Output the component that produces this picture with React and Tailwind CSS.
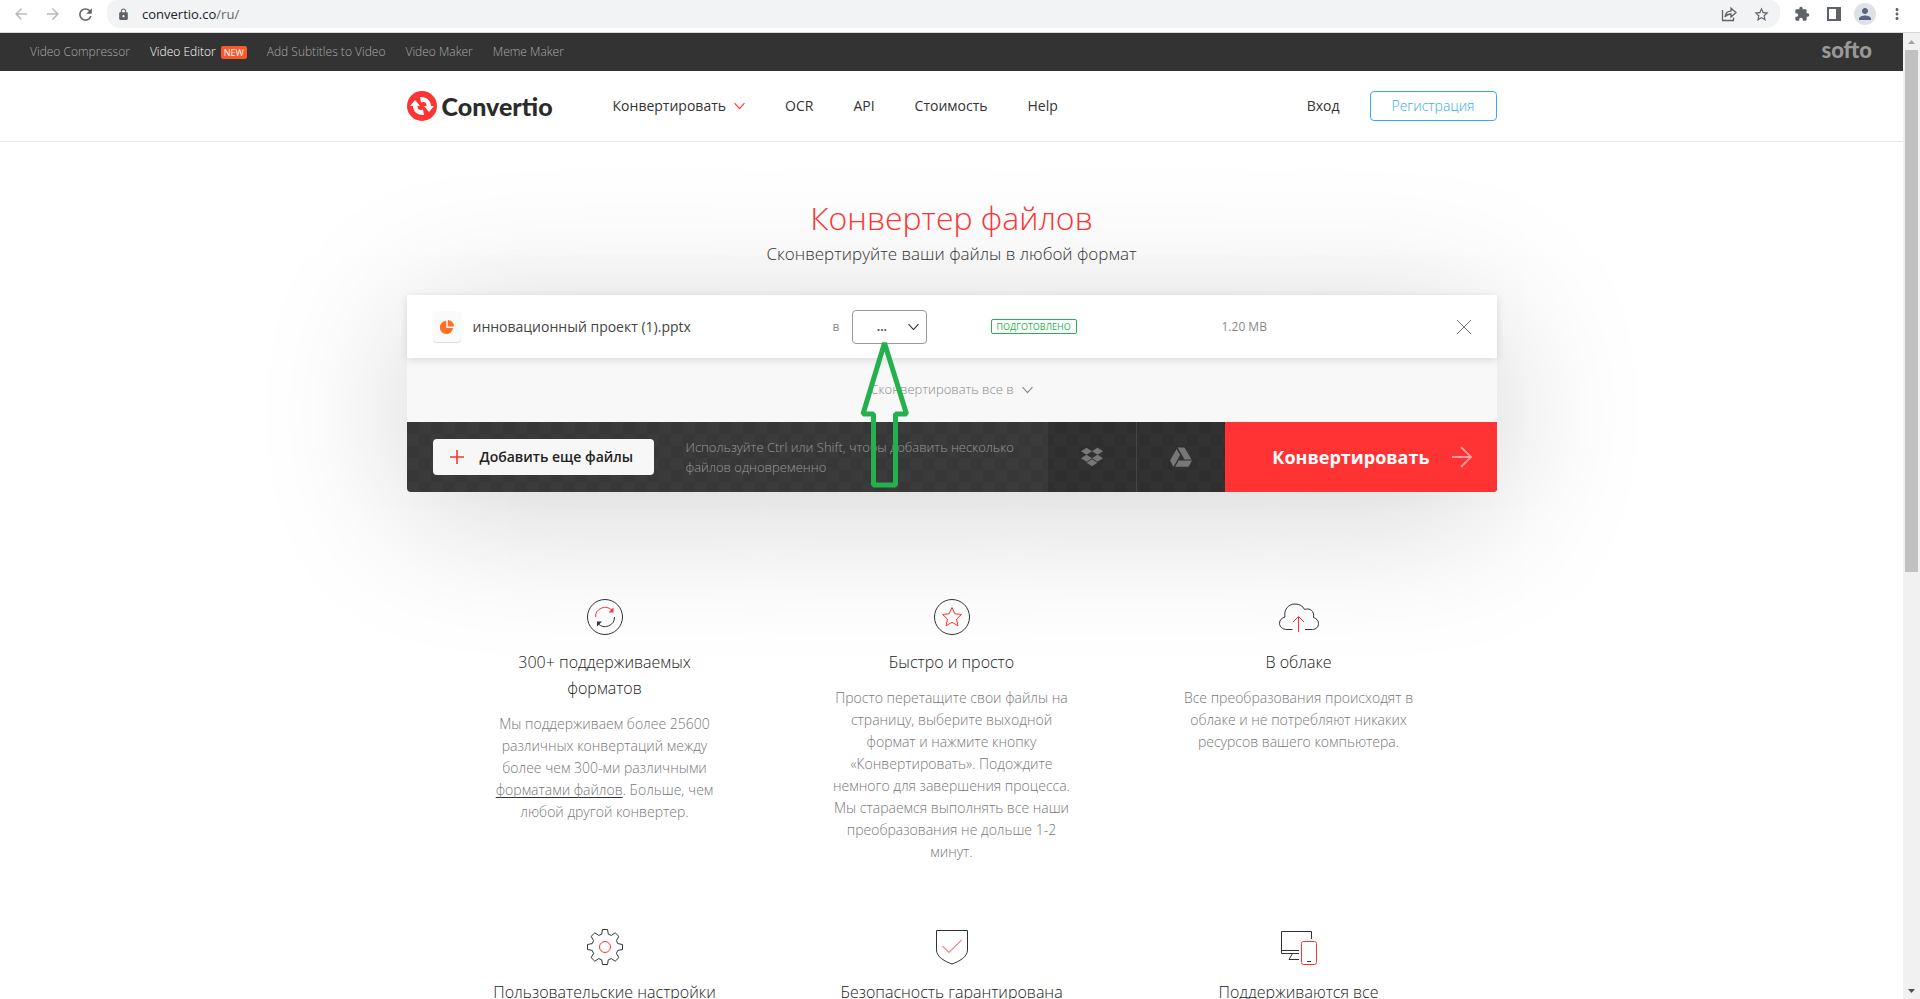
// App.jsx
import React from "react";
import {
  MdArrowBack,
  MdArrowForward,
  MdRefresh,
  MdLock,
  MdStarBorder,
  MdExtension,
  MdMoreVert,
  MdPerson,
} from "react-icons/md";
import { FaDropbox, FaGoogleDrive } from "react-icons/fa";

const promoLinks = [
  { label: "Video Compressor" },
  { label: "Video Editor", isNew: true },
  { label: "Add Subtitles to Video" },
  { label: "Video Maker" },
  { label: "Meme Maker" },
];

function Chevron({ className }) {
  return (
    <svg viewBox="0 0 10 7" className={className} fill="none" stroke="currentColor">
      <path d="M0.5 1 L5 6 L9.5 1" />
    </svg>
  );
}

// fake browser toolbar
function BrowserBar() {
  return (
    <div className="flex h-[33px] shrink-0 items-start border-b border-[#d5d7da] bg-white pl-3 text-[#5f6368]">
      <div className="flex h-7 items-center gap-3.5">
        <button aria-label="Назад" className="text-[#bababa]"><MdArrowBack size={18} /></button>
        <button aria-label="Вперёд" className="text-[#bababa]"><MdArrowForward size={18} /></button>
        <button aria-label="Обновить"><MdRefresh size={19} /></button>
      </div>
      <div className="ml-3 flex h-7 flex-1 items-center rounded-b-[14px] rounded-t-[10px] bg-[#f1f3f4] px-2.5">
        <MdLock size={13} />
        <div className="ml-3 flex-1 text-[13px] leading-5">
          <span className="text-[#202124]">convertio.co</span>/ru/
        </div>
        <div className="flex items-center gap-4">
          <button aria-label="Поделиться">
            <svg width="16" height="16" viewBox="0 0 16 16" fill="none" stroke="currentColor" strokeWidth="1.3">
              <path d="M1.5 4 V14.5 H12.5 V11.5" />
              <path d="M4 11 C4.5 7 7 5.2 10 5.2 V2.2 L15 6.6 L10 11 V8 C7.5 8 5.5 8.8 4 11 Z" />
            </svg>
          </button>
          <button aria-label="В закладки"><MdStarBorder size={17} /></button>
        </div>
      </div>
      <div className="mx-3.5 flex h-7 items-center gap-3">
        <div className="flex items-center gap-4">
          <button aria-label="Расширения"><MdExtension size={16} /></button>
          <button aria-label="Боковая панель">
            <svg width="16" height="16" viewBox="0 0 16 16">
              <path d="M1 1 H15 V15 H1 Z M3 3 V13 H10 V3 Z" fill="currentColor" fillRule="evenodd" />
            </svg>
          </button>
        </div>
        <button aria-label="Профиль" className="flex size-[22px] items-center justify-center rounded-full bg-[#dee1e6] text-[#5a6380]">
          <MdPerson size={18} />
        </button>
        <button aria-label="Меню"><MdMoreVert size={18} /></button>
      </div>
    </div>
  );
}

function PromoBar() {
  return (
    <div className="flex h-[38px] items-center justify-between bg-[#333] pl-[30px] pr-[31px] text-xs font-light text-[#aaa]">
      <div className="flex gap-5">
        {promoLinks.map((link) => (
          <a key={link.label} href="#" className={link.isNew ? "flex items-center gap-[5px] text-white" : ""}>
            {link.label}
            {link.isNew && (
              <span className="rounded-xs bg-[#f9572c] px-[3px] text-[9px] leading-[13px] font-normal">NEW</span>
            )}
          </a>
        ))}
      </div>
      <a href="#" className="pb-1 font-[Lato] text-[22px] leading-6 font-black text-[#999]">softo</a>
    </div>
  );
}

function Logo() {
  return (
    <a href="#" className="flex items-center gap-[5px]">
      <svg width="30" height="30" viewBox="0 0 30 30">
        <circle cx="15" cy="15" r="15" fill="#ff3333" />
        <g fill="#fff">
          <path d="M8 9 L13 15 H10.5 C10.5 18.5 12.5 20 16 18.5 L17 24 C10.5 24.5 6 20.5 6 15 H3 Z" />
          <path
            d="M8 9 L13 15 H10.5 C10.5 18.5 12.5 20 16 18.5 L17 24 C10.5 24.5 6 20.5 6 15 H3 Z"
            transform="rotate(180 15 15)"
          />
        </g>
      </svg>
      <span className="font-[Lato] text-[25px] leading-7 font-black text-[#2b2b2b]">Convertio</span>
    </a>
  );
}

function Header() {
  return (
    <header className="border-b border-[#e8e8e8]">
      <div className="mx-auto flex h-[70px] max-w-[1090px] items-center text-sm text-[#333]">
        <Logo />
        <nav className="ml-[60px] flex items-center gap-10">
          <a href="#" className="flex items-center gap-2">
            Конвертировать
            <Chevron className="w-[11px] text-[#ff3333]" />
          </a>
          <a href="#">OCR</a>
          <a href="#">API</a>
          <a href="#">Стоимость</a>
          <a href="#">Help</a>
        </nav>
        <div className="ml-auto flex items-center gap-[30px]">
          <a href="#">Вход</a>
          <button className="h-[30px] w-[127px] rounded border border-[#33aee6] font-light text-[#33aee6]">
            Регистрация
          </button>
        </div>
      </div>
    </header>
  );
}

// green annotation arrow that points at the format select
function PointerArrow() {
  return (
    <svg
      className="pointer-events-none absolute top-[31px] left-1 z-10"
      width="56"
      height="150"
      viewBox="0 0 56 150"
      fill="none"
      stroke="#22b14c"
      strokeWidth="5"
    >
      <path d="M28.5 2 L7 73 H17.5 V144 H39.5 V73 H50.5 Z" strokeLinejoin="bevel" />
    </svg>
  );
}

function FileRow() {
  return (
    <div className="relative z-10 grid h-[63px] grid-cols-[426fr_158fr_231fr_275fr] items-center bg-white shadow-[0_2px_8px_rgba(0,0,0,0.12)]">
      <div className="flex items-center gap-3 pl-[26px]">
        <div className="flex h-[31px] w-7 items-center justify-center rounded bg-[#fafafa] shadow-[0_1px_1px_rgba(0,0,0,0.15)]">
          <svg width="14" height="14" viewBox="0 0 14 14" fill="#ff6f26">
            <path d="M6.3 0.8 A6.6 6.6 0 1 0 13 8 H6.3 Z" />
            <path d="M7.8 0 A6.2 6.2 0 0 1 14 6.4 H7.8 Z" />
          </svg>
        </div>
        <span className="text-sm text-[#444]">инновационный проект (1).pptx</span>
      </div>
      <div className="flex items-center gap-[13px]">
        <label htmlFor="format" className="text-xs text-[#888]">в</label>
        <div className="relative">
          <select
            id="format"
            className="h-[34px] w-[75px] appearance-none rounded border border-[#999] bg-white pr-4 text-center text-xs font-bold text-[#555]"
          >
            <option>...</option>
          </select>
          <Chevron className="pointer-events-none absolute top-[13px] right-2 w-[11px] text-[#333]" />
          <PointerArrow />
        </div>
      </div>
      <div>
        <span className="block w-fit rounded-xs border border-[#25b34b] px-[5px] text-[9px] leading-[13px] text-[#25b34b]">
          ПОДГОТОВЛЕНО
        </span>
      </div>
      <div className="flex items-center justify-between pr-[26px] text-xs text-[#888]">
        1.20 MB
        <button aria-label="Удалить файл">
          <svg width="14" height="14" viewBox="0 0 14 14" stroke="#777" strokeWidth="1">
            <path d="M0 0 L14 14 M14 0 L0 14" />
          </svg>
        </button>
      </div>
    </div>
  );
}

function Converter() {
  return (
    <section className="mt-[27px] rounded-b shadow-[0_20px_150px_rgba(0,0,0,0.18)]">
      <FileRow />
      <div className="flex h-16 items-center justify-center bg-[#f8f8f8]">
        <button className="flex items-center gap-2 text-[13px] font-light text-[#888]">
          Сконвертировать все в
          <Chevron className="w-[11px]" />
        </button>
      </div>
      <div className="flex h-[70px] overflow-hidden rounded-b bg-[#333] bg-[conic-gradient(#3b3b3b_25%,#373737_0_50%,#3b3b3b_0_75%,#373737_0)] bg-size-[24px_24px]">
        <div className="flex flex-1 items-center gap-8 pl-[26px]">
          <button className="flex h-9 w-[221px] items-center gap-4 rounded bg-[#f7f7f7] pl-[17px] text-sm font-semibold text-[#222]">
            <svg width="14" height="14" viewBox="0 0 14 14" stroke="#ff3333" strokeWidth="1.6">
              <path d="M7 0 V14 M0 7 H14" />
            </svg>
            Добавить еще файлы
          </button>
          <p className="w-[340px] text-[13px] leading-5 font-light text-[#999]">
            Используйте Ctrl или Shift, чтобы добавить несколько файлов одновременно
          </p>
        </div>
        <button aria-label="Dropbox" className="flex w-[89px] items-center justify-center border-r border-[#444] bg-black/15 text-[#777]">
          <FaDropbox size={22} />
        </button>
        <button aria-label="Google Drive" className="flex w-[88px] items-center justify-center bg-black/15 text-[#777]">
          <FaGoogleDrive size={22} />
        </button>
        <button className="flex w-[272px] items-center justify-end gap-[22px] bg-[#ff3333] pr-[25px] text-lg font-bold text-white">
          Конвертировать
          <svg width="20" height="22" viewBox="0 0 20 22" fill="none" stroke="#ff9c9c" strokeWidth="1.8">
            <path d="M0 11 H19 M9 1 L19 11 L9 21" />
          </svg>
        </button>
      </div>
    </section>
  );
}

const iconProps = { width: 40, height: 36, viewBox: "0 0 40 36", fill: "none", stroke: "#333" };

const features = [
  {
    title: "300+ поддерживаемых форматов",
    icon: (
      <svg {...iconProps}>
        <circle cx="20" cy="18" r="17.5" />
        <path d="M10.5 18 A9.5 9.5 0 0 1 27 11.5" stroke="#ff3333" />
        <path d="M28.5 8.5 V13.5 H23.5 Z" fill="#ff3333" stroke="none" />
        <path d="M29.5 18 A9.5 9.5 0 0 1 13 24.5" />
        <path d="M12 27.5 V22.5 H17 Z" fill="#333" stroke="none" />
      </svg>
    ),
    text: (
      <>
        Мы поддерживаем более 25600 различных конвертаций между более чем 300-ми различными{" "}
        <a href="#" className="underline decoration-[#333] underline-offset-2 [text-decoration-skip-ink:none]">
          форматами файлов
        </a>
        . Больше, чем любой другой конвертер.
      </>
    ),
  },
  {
    title: "Быстро и просто",
    icon: (
      <svg {...iconProps}>
        <circle cx="20" cy="18" r="17.5" />
        <path
          d="M20 8.5 L22.8 14.8 L29.5 15.5 L24.5 20 L26 26.8 L20 23.3 L14 26.8 L15.5 20 L10.5 15.5 L17.2 14.8 Z"
          stroke="#ff3333"
        />
      </svg>
    ),
    text: "Просто перетащите свои файлы на страницу, выберите выходной формат и нажмите кнопку «Конвертировать». Подождите немного для завершения процесса. Мы стараемся выполнять все наши преобразования не дольше 1-2 минут.",
  },
  {
    title: "В облаке",
    icon: (
      <svg {...iconProps}>
        <path d="M13.5 30.5 H8 C3.5 30.5 0.5 27.8 0.5 24.3 C0.5 21.3 2.5 19 6 18 C4.5 10 10 5 16 5 C20.5 5 24 7 25.5 10.5 C31 8.5 35.5 12 34.5 18.5 C37.5 19.5 39.5 21.5 39.5 24.5 C39.5 28 37 30.5 33.5 30.5 H26" />
        <path d="M19.5 33 V18 M14 23 L19.5 17.5 L25 23" stroke="#ff3333" />
      </svg>
    ),
    text: "Все преобразования происходят в облаке и не потребляют никаких ресурсов вашего компьютера.",
  },
  {
    title: "Пользовательские настройки",
    icon: (
      <svg {...iconProps}>
        <path d="M17.5 0.5 H22.5 L23.3 5.2 L26.3 6.4 L30.2 3.8 L33.9 7.4 L31.4 11.6 L32.8 14.6 L37.5 15.5 V20.5 L32.8 21.4 L31.4 24.4 L33.9 28.6 L30.2 32.2 L26.3 29.6 L23.3 30.8 L22.5 35.5 H17.5 L16.7 30.8 L13.7 29.6 L9.8 32.2 L6.1 28.6 L8.6 24.4 L7.2 21.4 L2.5 20.5 V15.5 L7.2 14.6 L8.6 11.6 L6.1 7.4 L9.8 3.8 L13.7 6.4 L16.7 5.2 Z" />
        <circle cx="20" cy="18" r="5.5" stroke="#ff3333" />
      </svg>
    ),
  },
  {
    title: "Безопасность гарантирована",
    icon: (
      <svg {...iconProps}>
        <path d="M4.5 1.5 H35.5 V21 C35.5 28 27 32.5 20 35 C13 32.5 4.5 28 4.5 21 Z" />
        <path d="M10.5 17 L17 23.5 L29.5 11" stroke="#ff3333" />
      </svg>
    ),
  },
  {
    title: "Поддерживаются все устройства",
    icon: (
      <svg {...iconProps}>
        <path d="M32.5 10 V2.5 H2.5 V24.5 H20 M2.5 21.5 H20 M13.5 24.5 L10 30.5 H20" />
        <rect x="22.5" y="12.5" width="15" height="23" rx="2" stroke="#ff3333" />
        <path d="M28 32.5 H32" />
      </svg>
    ),
  },
];

function Features() {
  return (
    <section className="mx-auto mt-[107px] grid max-w-[1041px] grid-cols-3 gap-y-[66px] text-center">
      {features.map((item) => (
        <div key={item.title} className="flex flex-col items-center px-[52px]">
          {item.icon}
          <h3 className="mt-[14px] text-base leading-[26px] font-light text-[#222]">{item.title}</h3>
          {item.text && (
            <p className="mt-3 text-sm leading-[22px] font-light text-[#777]">{item.text}</p>
          )}
        </div>
      ))}
    </section>
  );
}

// static scrollbar on the right of the page
function ScrollBar() {
  return (
    <div className="flex w-[17px] shrink-0 flex-col items-center bg-[#f1f1f1]">
      <svg width="17" height="17" viewBox="0 0 17 17"><path d="M5 11 L8.5 7 L12 11 Z" fill="#a3a3a3" /></svg>
      <div className="flex w-full flex-1 justify-center">
        <div className="h-[56%] w-[13px] bg-[#c1c1c1]" />
      </div>
      <svg width="17" height="17" viewBox="0 0 17 17"><path d="M5 7 L8.5 11 L12 7 Z" fill="#505050" /></svg>
    </div>
  );
}

export default function App() {
  return (
    <div className="flex h-screen flex-col overflow-hidden bg-white font-['Open_Sans',sans-serif]">
      <BrowserBar />
      <div className="flex min-h-0 flex-1">
        <div className="min-w-0 flex-1 overflow-hidden">
          <PromoBar />
          <Header />
          <main className="mx-auto max-w-[1090px] pt-[54px]">
            <h1 className="text-center text-[32px] leading-[44px] font-light text-[#ff3333]">Конвертер файлов</h1>
            <p className="text-center text-[17px] leading-7 font-light text-[#333]">
              Сконвертируйте ваши файлы в любой формат
            </p>
            <Converter />
            <Features />
          </main>
        </div>
        <ScrollBar />
      </div>
    </div>
  );
}
